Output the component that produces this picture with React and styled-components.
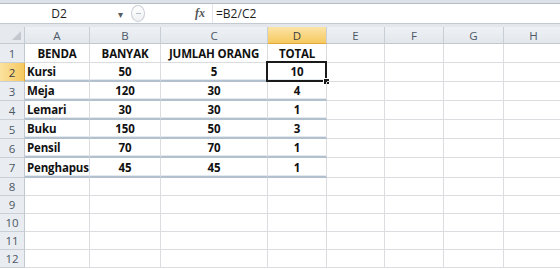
import React from "react";
import styled, { createGlobalStyle } from "styled-components";

const GlobalStyle = createGlobalStyle`
  body {
    margin: 0;
    background: #ffffff;
    overflow: hidden;
    font-family: "Open Sans", "Liberation Sans", sans-serif;
  }
`;

const columns = ["A", "B", "C", "D", "E", "F", "G", "H", ""];
const colWidths = "25px 65px 71px 107px 59px 58px 59px 60px 60px 60px";

const data = [
  ["BENDA", "BANYAK", "JUMLAH ORANG", "TOTAL"],
  ["Kursi", "50", "5", "10"],
  ["Meja", "120", "30", "4"],
  ["Lemari", "30", "30", "1"],
  ["Buku", "150", "50", "3"],
  ["Pensil", "70", "70", "1"],
  ["Penghapus", "45", "45", "1"],
];

const rowHeights = [19, 19, 19, 19, 19, 19, 20, 18, 18, 18, 18, 18];

const App = () => {
  return (
    <Window>
      <GlobalStyle />
      <TopStrip />
      <FormulaBar>
        <NameBox>
          <NameText>D2</NameText>
          <Arrow>▾</Arrow>
        </NameBox>
        <Grip>
          <GripDash />
        </Grip>
        <FxLabel>fx</FxLabel>
        <FormulaInput>=B2/C2</FormulaInput>
      </FormulaBar>
      <BarGap />
      <Sheet>
        <Corner>
          <CornerTriangle />
        </Corner>
        {columns.map((c, i) => (
          <ColHeader key={c + i} $active={c === "D"}>
            {c}
          </ColHeader>
        ))}
        {rowHeights.map((h, r) => (
          <React.Fragment key={r}>
            <RowHeader $active={r === 1} style={{ height: h }}>
              {r + 1}
            </RowHeader>
            {columns.map((c, ci) => {
              const text = data[r] ? data[r][ci] : undefined;
              const inTable = r >= 1 && r <= 6 && ci <= 3;
              return (
                <Cell
                  key={ci}
                  style={{ height: h }}
                  $align={ci === 0 && r > 0 ? "left" : "center"}
                  $table={inTable}
                >
                  {text}
                  {r === 1 && ci === 3 && (
                    <Selection>
                      <Handle />
                    </Selection>
                  )}
                </Cell>
              );
            })}
          </React.Fragment>
        ))}
      </Sheet>
    </Window>
  );
};

const Window = styled.div`
  width: 560px;
  height: 269px;
  overflow: hidden;
  background: #ffffff;
`;

const TopStrip = styled.div`
  height: 3px;
  background: #dde2e8;
  border-bottom: 1px solid #b4bcc6;
`;

const FormulaBar = styled.div`
  display: flex;
  align-items: center;
  height: 19px;
  background: #ffffff;
`;

const NameBox = styled.div`
  display: flex;
  align-items: center;
  width: 131px;
  height: 100%;
`;

const NameText = styled.span`
  width: 118px;
  text-align: center;
  font-size: 12px;
  color: #1e1e1e;
`;

const Arrow = styled.span`
  font-size: 10px;
  color: #555b63;
  line-height: 1;
`;

const Grip = styled.div`
  width: 14px;
  height: 17px;
  border-radius: 50%;
  border: 1px solid #c9ced5;
  background: linear-gradient(#ffffff, #eef0f3);
  display: flex;
  align-items: center;
  justify-content: center;
  box-sizing: border-box;
`;

const GripDash = styled.span`
  width: 5px;
  height: 1px;
  background: #b8bec6;
`;

const FxLabel = styled.span`
  margin-left: 50px;
  width: 17px;
  font-family: "Liberation Serif", serif;
  font-style: italic;
  font-weight: 700;
  font-size: 12px;
  color: #555555;
`;

const FormulaInput = styled.div`
  flex: 1;
  height: 100%;
  display: flex;
  align-items: center;
  padding-left: 3px;
  border-left: 1px solid #e1e4e8;
  font-size: 12px;
  color: #1e1e1e;
`;

const BarGap = styled.div`
  height: 3px;
  background: #e4e8ed;
  border-top: 1px solid #c3c9d1;
`;

const Sheet = styled.div`
  display: grid;
  grid-template-columns: ${colWidths};
  grid-auto-rows: min-content;
  width: 624px;
`;

const Corner = styled.div`
  position: relative;
  height: 17px;
  background: #e6e9ee;
  border-right: 1px solid #c5cbd3;
  border-bottom: 1px solid #c5cbd3;
  box-sizing: border-box;
`;

const CornerTriangle = styled.div`
  position: absolute;
  right: 3px;
  bottom: 3px;
  width: 0;
  height: 0;
  border-left: 9px solid transparent;
  border-bottom: 9px solid #c3c8cf;
`;

const ColHeader = styled.div`
  height: 17px;
  box-sizing: border-box;
  display: flex;
  align-items: center;
  justify-content: center;
  font-size: 11.5px;
  color: ${(p) => (p.$active ? "#3b3b3b" : "#4c5866")};
  background: ${(p) =>
    p.$active
      ? "linear-gradient(#fbe4a6, #f6c95f)"
      : "linear-gradient(#eef1f4, #e3e7ec)"};
  border-right: 1px solid #c8ced6;
  border-bottom: 1px solid ${(p) => (p.$active ? "#e0a73c" : "#c2c8d0")};
`;

const RowHeader = styled.div`
  box-sizing: border-box;
  display: flex;
  align-items: center;
  justify-content: center;
  font-size: 11.5px;
  color: ${(p) => (p.$active ? "#3b3b3b" : "#4c5866")};
  background: ${(p) =>
    p.$active ? "linear-gradient(90deg, #fbe2a0, #f6c960)" : "#e9ecf0"};
  border-right: 1px solid ${(p) => (p.$active ? "#e0a73c" : "#c2c8d0")};
  border-bottom: 1px solid #c9cfd6;
`;

const Cell = styled.div`
  position: relative;
  box-sizing: border-box;
  display: flex;
  align-items: center;
  justify-content: ${(p) => (p.$align === "left" ? "flex-start" : "center")};
  padding: 0 2px;
  font-size: 11.5px;
  font-weight: 700;
  letter-spacing: -0.15px;
  color: #111111;
  white-space: nowrap;
  border-right: 1px solid #dadcdf;
  border-bottom: ${(p) =>
    p.$table ? "2px solid #b3c1cf" : "1px solid #dadcdf"};
  box-shadow: ${(p) => (p.$table ? "inset 0 -1px 0 #e4e9ef" : "none")};
`;

const Selection = styled.div`
  position: absolute;
  left: -2px;
  top: -2px;
  right: -1px;
  bottom: -2px;
  border: 2px solid #1a1a1a;
  pointer-events: none;
`;

const Handle = styled.div`
  position: absolute;
  right: -5px;
  bottom: -5px;
  width: 5px;
  height: 5px;
  background: #1a1a1a;
  border: 1px solid #ffffff;
`;

export default App;
